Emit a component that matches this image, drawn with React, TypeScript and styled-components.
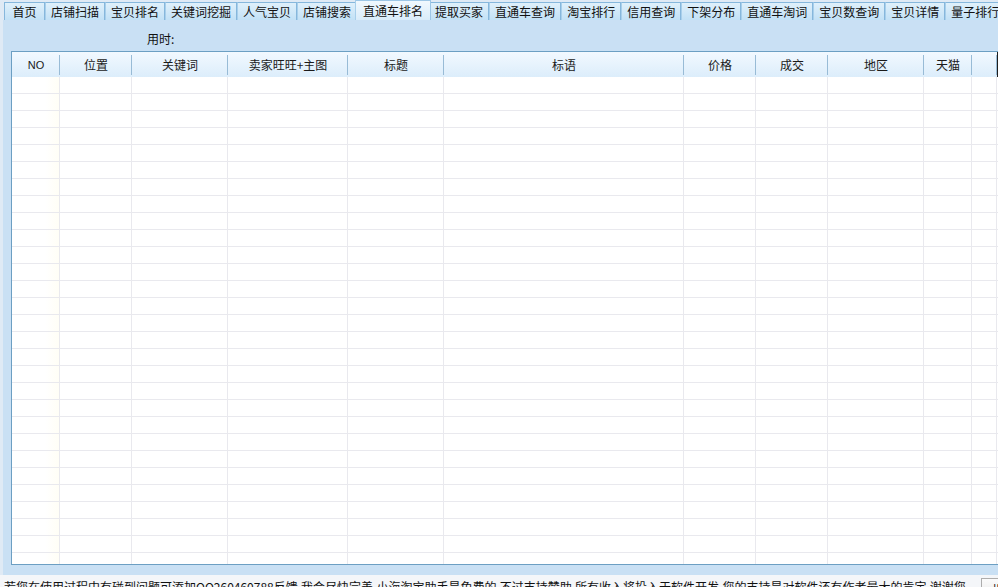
import React from "react";
import styled, { createGlobalStyle } from "styled-components";

const GlobalStyle = createGlobalStyle`
  html, body {
    margin: 0;
    padding: 0;
    background: #f4f6f9;
  }
  body {
    font-family: "Noto Sans CJK SC", "Microsoft YaHei", sans-serif;
    font-size: 12px;
    color: #111;
  }
`;

interface Column {
  title: string;
  width: number;
  latin?: boolean;
  dark?: boolean;
}

const tabs = [
  "首页",
  "店铺扫描",
  "宝贝排名",
  "关键词挖掘",
  "人气宝贝",
  "店铺搜索",
  "直通车排名",
  "提取买家",
  "直通车查询",
  "淘宝排行",
  "信用查询",
  "下架分布",
  "直通车淘词",
  "宝贝数查询",
  "宝贝详情",
  "量子排行",
];

const activeTab = "直通车排名";

const columns: Column[] = [
  { title: "NO", width: 48, latin: true },
  { title: "位置", width: 72 },
  { title: "关键词", width: 96 },
  { title: "卖家旺旺+主图", width: 120 },
  { title: "标题", width: 96 },
  { title: "标语", width: 240 },
  { title: "价格", width: 72 },
  { title: "成交", width: 72 },
  { title: "地区", width: 96 },
  { title: "天猫", width: 48 },
  { title: "", width: 25 },
  { title: "", width: 120, dark: true },
];

const template = columns.map((c) => `${c.width}px`).join(" ");
const rows = Array.from({ length: 30 }, (_, i) => i);

const notice =
  "若您在使用过程中有碰到问题可添加QQ260460788反馈,我会尽快完善.小海淘宝助手是免费的,不过支持赞助,所有收入将投入于软件开发.您的支持是对软件还有作者最大的肯定.谢谢您";

export default function App() {
  return (
    <>
      <GlobalStyle />
      <Window>
        <TabStrip>
          {tabs.map((t) => (
            <Tab key={t} $active={t === activeTab}>
              {t}
            </Tab>
          ))}
        </TabStrip>
        <TabPanel>
          <TimerRow>用时:</TimerRow>
          <Grid>
            <HeaderRow $template={template}>
              {columns.map((c, i) => (
                <HeaderCell key={i} $latin={c.latin} $dark={c.dark}>
                  {c.title}
                </HeaderCell>
              ))}
            </HeaderRow>
            <Body>
              {rows.map((r) => (
                <BodyRow key={r} $template={template}>
                  {columns.map((c, i) => (
                    <BodyCell key={i} $first={i === 0} />
                  ))}
                </BodyRow>
              ))}
            </Body>
          </Grid>
        </TabPanel>
        <Footer>
          <Notice>{notice}</Notice>
          <DonateButton>捐助</DonateButton>
        </Footer>
      </Window>
    </>
  );
}

// --- Styled Components ---
const Window = styled.div`
  width: 998px;
  height: 587px;
  overflow: hidden;
  background: #dfeaf5;
  display: flex;
  flex-direction: column;
`;

const TabStrip = styled.div`
  display: flex;
  align-items: flex-end;
  height: 20px;
  padding-left: 4px;
  white-space: nowrap;
  flex-shrink: 0;
`;

const Tab = styled.div<{ $active: boolean }>`
  position: relative;
  box-sizing: border-box;
  min-width: 41px;
  padding: ${({ $active }) => ($active ? "0 7px" : "0 5px")};
  height: ${({ $active }) => ($active ? "20px" : "18px")};
  margin: ${({ $active }) => ($active ? "0 -2px" : "0")};
  z-index: ${({ $active }) => ($active ? 2 : 1)};
  display: flex;
  align-items: center;
  justify-content: center;
  flex-shrink: 0;
  font-size: 12px;
  line-height: 16px;
  color: #111;
  border: 1px solid ${({ $active }) => ($active ? "#9cc6e6" : "#86b7dc")};
  border-bottom: none;
  background: ${({ $active }) =>
    $active
      ? "linear-gradient(#f0f8fe, #d9ecfa)"
      : "linear-gradient(#dff0fb, #c2e1f6)"};
  & + & {
    border-left-color: #a8cfeb;
  }
`;

const TabPanel = styled.div`
  width: 1200px;
  height: 555px;
  margin-left: 3px;
  background: #c9e0f4;
  flex-shrink: 0;
  display: flex;
  flex-direction: column;
`;

const TimerRow = styled.div`
  height: 31px;
  box-sizing: border-box;
  padding: 5px 0 0 144px;
  display: flex;
  align-items: center;
  font-size: 12px;
  color: #111;
`;

const Grid = styled.div`
  margin-left: 8px;
  width: 1150px;
  height: 514px;
  box-sizing: border-box;
  border: 1px solid #6c9fc3;
  background: #ffffff;
  overflow: hidden;
  display: flex;
  flex-direction: column;
`;

const HeaderRow = styled.div<{ $template: string }>`
  display: grid;
  grid-template-columns: ${({ $template }) => $template};
  height: 25px;
  flex-shrink: 0;
  background: linear-gradient(#f2f9ff, #dcedfb);
`;

const HeaderCell = styled.div<{ $latin?: boolean; $dark?: boolean }>`
  position: relative;
  display: flex;
  align-items: center;
  justify-content: center;
  font-family: ${({ $latin }) =>
    $latin ? `"Liberation Sans", Arial, sans-serif` : `"Noto Sans CJK SC", sans-serif`};
  font-size: ${({ $latin }) => ($latin ? "11px" : "12px")};
  color: #1a1a1a;
  border-left: ${({ $dark }) => ($dark ? "2px solid #1d1d1d" : "none")};
  &::after {
    content: "";
    position: absolute;
    right: 0;
    top: 3px;
    bottom: 2px;
    width: 1px;
    background: #98bbd6;
    display: ${({ $dark }) => ($dark ? "none" : "block")};
  }
`;

const Body = styled.div`
  flex: 1;
  overflow: hidden;
`;

const BodyRow = styled.div<{ $template: string }>`
  display: grid;
  grid-template-columns: ${({ $template }) => $template};
  height: 17px;
  box-sizing: border-box;
  border-bottom: 1px solid #e9e9ee;
`;

const BodyCell = styled.div<{ $first: boolean }>`
  border-right: 1px solid #e9e9ee;
  background: ${({ $first }) =>
    $first ? "linear-gradient(90deg, #ffffff 70%, #fffef6)" : "#ffffff"};
`;

const Footer = styled.div`
  display: flex;
  align-items: flex-start;
  padding: 3px 0 0 4px;
  background: #f4f6f9;
  white-space: nowrap;
  flex-shrink: 0;
`;

const Notice = styled.div`
  width: 972px;
  flex-shrink: 0;
  overflow: hidden;
  font-size: 12px;
  line-height: 18px;
  color: #111;
`;

const DonateButton = styled.button`
  margin-left: 5px;
  margin-top: 0;
  flex-shrink: 0;
  height: 22px;
  padding: 0 10px;
  border: 1px solid #adadad;
  background: linear-gradient(#fbfbfb, #e8e8e8);
  font-family: "Noto Sans CJK SC", sans-serif;
  font-size: 12px;
  color: #111;
`;
